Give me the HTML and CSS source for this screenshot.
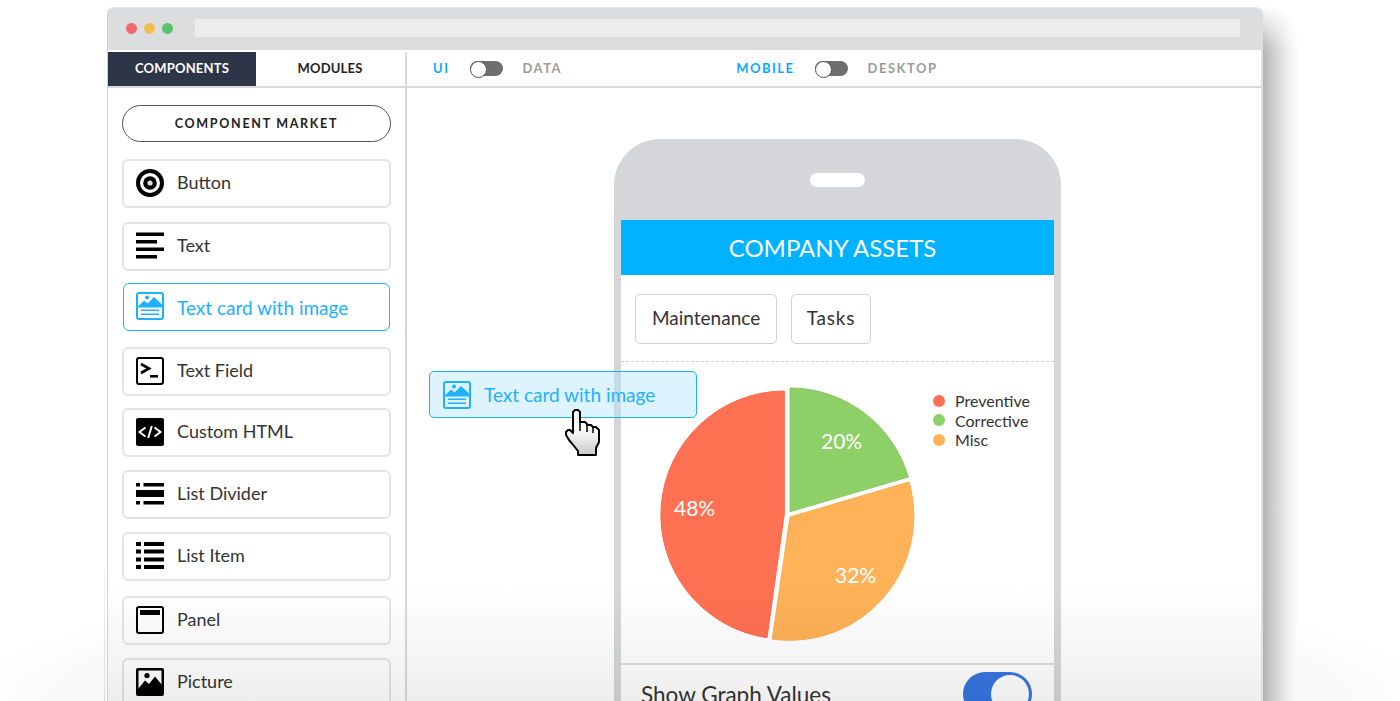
FILE: index.html
```html
<!DOCTYPE html>
<html>
<head>
    <meta charset="utf-8">
    <link rel="stylesheet" href="styles.css">
</head>
<body>
    <div class="window-shadow"></div>
    <div class="window-edge"></div>

    <div class="window">
        <div class="titlebar">
            <div class="dots">
                <span class="dot dot-red"></span>
                <span class="dot dot-yellow"></span>
                <span class="dot dot-green"></span>
            </div>
            <div class="urlbar"></div>
        </div>

        <div class="main">
            <div class="sidebar">
                <div class="tabs">
                    <div class="tab tab-active">COMPONENTS</div>
                    <div class="tab">MODULES</div>
                </div>
                <div class="palette">
                    <div class="market">COMPONENT MARKET</div>
                    <div class="items">
                        <div class="item">
                            <svg class="icon" viewBox="0 0 28 28"><circle cx="14" cy="14" r="12" fill="none" stroke="#000" stroke-width="4"/><circle cx="14" cy="14" r="6.800"/><circle cx="14" cy="14" r="2.600" fill="#ddd"/></svg>
                            <span>Button</span>
                        </div>
                        <div class="item">
                            <svg class="icon" viewBox="0 0 28 28"><path d="M0 0.500h28v3.500H0zM0 8h21v3.500H0zM0 15.500h28v3.500H0zM0 23h21v3.500H0z"/></svg>
                            <span>Text</span>
                        </div>
                        <div class="item item-selected">
                            <svg class="icon" viewBox="0 0 28 28" fill="#1fb0ff"><rect x="1" y="1" width="26" height="26" rx="2" fill="none" stroke="#1fb0ff" stroke-width="2"/><circle cx="11" cy="5.500" r="2"/><path d="M2 14.500L8 8.500l3.500 3L18 5l8 7.500v3H2z"/><path d="M5 17.500h18v1.400H5zM5 21.500h18v1.400H5z"/></svg>
                            <span>Text card with image</span>
                        </div>
                        <div class="item">
                            <svg class="icon" viewBox="0 0 28 28"><rect x="1" y="1" width="26" height="26" rx="2" fill="none" stroke="#000" stroke-width="2"/><path d="M5 7l8 4.500L5 16" fill="none" stroke="#000" stroke-width="2.600"/><path d="M14 18h8v2.600h-8z"/></svg>
                            <span>Text Field</span>
                        </div>
                        <div class="item">
                            <svg class="icon" viewBox="0 0 28 28"><rect width="28" height="28" rx="2"/><path d="M9.500 9.500L3.500 14l6 4.500M18.500 9.500l6 4.500-6 4.500M15.800 8l-3.600 12" fill="none" stroke="#fff" stroke-width="2"/></svg>
                            <span>Custom HTML</span>
                        </div>
                        <div class="item">
                            <svg class="icon" viewBox="0 0 28 28"><path d="M0 3h4v3.500H0zM7.500 3H28v3.500H7.500zM0 10h28v7H0zM0 21h4v3.500H0zM7.500 21H28v3.500H7.500z"/></svg>
                            <span>List Divider</span>
                        </div>
                        <div class="item">
                            <svg class="icon" viewBox="0 0 28 28"><path d="M0 0h5v4H0zM8 0h20v4H8zM0 7.500h5v4H0zM8 7.500h20v4H8zM0 15.500h5v4H0zM8 15.500h20v4H8zM0 23h5v4H0zM8 23h20v4H8z"/></svg>
                            <span>List Item</span>
                        </div>
                        <div class="item">
                            <svg class="icon" viewBox="0 0 28 28"><rect x="1" y="1" width="26" height="26" rx="2" fill="none" stroke="#000" stroke-width="2"/><path d="M4 4h20v5H4z"/></svg>
                            <span>Panel</span>
                        </div>
                        <div class="item">
                            <svg class="icon" viewBox="0 0 28 28"><rect width="28" height="28" rx="2"/><path d="M2.500 2.500h23v23h-23z" fill="#fff"/><circle cx="11" cy="7.500" r="2.600"/><path d="M2 21l7-8.500 4 3.500 6-7.500 7 8.500v11H2z"/></svg>
                            <span>Picture</span>
                        </div>
                    </div>
                </div>
            </div>

            <div class="stage">
                <div class="toolbar">
                    <div class="switch-group">
                        <span class="mode mode-on">UI</span>
                        <span class="toggle"></span>
                        <span class="mode">DATA</span>
                    </div>
                    <div class="switch-group switch-group-device">
                        <span class="mode mode-on">MOBILE</span>
                        <span class="toggle"></span>
                        <span class="mode">DESKTOP</span>
                    </div>
                </div>

                <div class="phone">
                    <div class="phone-top"><span class="speaker"></span></div>
                    <div class="screen">
                        <div class="screen-title">COMPANY ASSETS</div>
                        <div class="chips">
                            <div class="chip">Maintenance</div>
                            <div class="chip">Tasks</div>
                        </div>
                        <div class="chart">
                            <svg class="pie" viewBox="0 0 260 260">
                                <path fill="#ff7152" stroke="#f9694a" d="M127.300 6V129L110 252.700A124 124 0 0 1 127.300 6z"/>
                                <path fill="#8dd068" stroke="#86c961" d="M133 3V126.700L251.300 92A123.500 123.500 0 0 0 133 3z"/>
                                <path fill="#ffb257" stroke="#fbac50" d="M133 132L252 97A124 124 0 0 1 115.300 254z"/>
                                <text class="pie-label" x="17" y="131">48%</text>
                                <text class="pie-label" x="164" y="64">20%</text>
                                <text class="pie-label" x="178" y="198">32%</text>
                            </svg>
                            <div class="legend">
                                <div class="legend-row"><span class="swatch swatch-red"></span>Preventive</div>
                                <div class="legend-row"><span class="swatch swatch-green"></span>Corrective</div>
                                <div class="legend-row"><span class="swatch swatch-orange"></span>Misc</div>
                            </div>
                        </div>
                        <div class="setting">
                            <span>Show Graph Values</span>
                            <span class="blue-switch"></span>
                        </div>
                    </div>
                </div>
            </div>
        </div>

        <!-- card being dragged -->
        <div class="drag-card">
            <svg class="icon" viewBox="0 0 28 28" fill="#1fb0ff"><rect x="1" y="1" width="26" height="26" rx="2" fill="none" stroke="#1fb0ff" stroke-width="2"/><circle cx="11" cy="5.500" r="2"/><path d="M2 14.500L8 8.500l3.500 3L18 5l8 7.500v3H2z"/><path d="M5 17.500h18v1.400H5zM5 21.500h18v1.400H5z"/></svg>
            <span>Text card with image</span>
        </div>
        <svg class="hand" viewBox="0 0 36 48">
            <defs>
                <linearGradient id="handFill" x1="0" y1="0" x2="0" y2="1">
                    <stop offset="0.4" stop-color="#fff"/>
                    <stop offset="1" stop-color="#c9c9c9"/>
                </linearGradient>
            </defs>
            <path fill="url(#handFill)" stroke="#000" stroke-width="2" stroke-linejoin="round" d="M8 3L10 1h3l2 2v10h5l2 2v1h4l2 2h3l3 3v12l-3 6v7H13v-4L9 37 4 31 1 26v-3l2-2h2l3 3z"/>
            <path fill="none" stroke="#000" stroke-width="1.500" d="M15 13v9M22 15v8M28 18v6"/>
        </svg>

        <div class="fade"></div>
    </div>
</body>
</html>
```

FILE: styles.css
```css
* {
    margin: 0;
    padding: 0;
    box-sizing: border-box;
}

html, body {
    height: 701px;
    overflow: hidden;
}

body {
    position: relative;
    font-family: Lato, "Open Sans", sans-serif;
    color: #333;
    background: radial-gradient(ellipse 760px 130px at 50% 100%, #f2f2f2 0%, #f8f8f8 78%, #fff 100%) no-repeat;
}

.window-shadow {
    position: absolute;
    left: 1263px;
    top: 6px;
    width: 34px;
    height: 695px;
    border-top-right-radius: 30px;
    background: linear-gradient(to right, #b4b4b4 0%, #d2d2d2 35%, #f0f0f0 75%, #fbfbfb 100%);
    -webkit-mask-image: linear-gradient(to bottom, transparent 0, #000 45px);
    mask-image: linear-gradient(to bottom, transparent 0, #000 45px);
}

.window-edge {
    position: absolute;
    left: 104px;
    top: 570px;
    width: 1px;
    height: 131px;
    background: linear-gradient(to bottom, #f2f2f2, #dcdcdc);
}

.window {
    position: relative;
    width: 1156px;
    height: 694px;
    margin: 7px 0 0 107px;
    border: 1px solid #e9e9e9;
    border-left: 1px solid #cfcfcf;
    border-right: 2px solid #dedede;
    border-bottom: none;
    border-radius: 7px 7px 0 0;
    background: #fff;
    overflow: hidden;
}

.titlebar {
    display: flex;
    align-items: center;
    height: 42px;
    padding: 0 0 2px 17px;
    background: #dcddde;
}

.dots {
    display: flex;
    gap: 5px;
}

.dot {
    width: 13px;
    height: 13px;
    border-radius: 50%;
    border: 1px solid #e2e2e2;
}

.dot-red { background: #f0686c; }
.dot-yellow { background: #f4bd4f; }
.dot-green { background: #58c36a; }

.urlbar {
    width: 1045px;
    height: 18px;
    margin-left: 21px;
    background: #ecedee;
}

.main {
    display: flex;
    height: 651px;
    padding-top: 2px;
}

.sidebar {
    width: 299px;
    border-right: 2px solid #d9d9d9;
    flex: none;
}

.tabs {
    display: flex;
    height: 36px;
    border-bottom: 2px solid #d9d9d9;
}

.tab {
    width: 148px;
    display: flex;
    align-items: center;
    justify-content: center;
    padding-bottom: 2px;
    font-size: 13px;
    font-weight: 700;
    letter-spacing: 0.2px;
    color: #222;
}

.tab-active {
    background: #2d3549;
    color: #fff;
}

.palette {
    padding: 17px 14px 0;
}

.market {
    display: flex;
    align-items: center;
    justify-content: center;
    height: 37px;
    border: 1.500px solid #555;
    border-radius: 19px;
    font-size: 12.500px;
    font-weight: 700;
    letter-spacing: 1.700px;
    color: #222;
}

.items {
    display: flex;
    flex-direction: column;
    gap: 13px;
    margin-top: 17px;
}

.item {
    display: flex;
    align-items: center;
    flex: none;
    height: 49px;
    padding: 0 0 2px 12px;
    border: 2px solid #e4e4e4;
    border-radius: 6px;
    font-size: 18px;
    color: #333;
}

.item span {
    padding-bottom: 2px;
}

.item:nth-child(2) { margin-top: 1px; }
.item:nth-child(3) { margin-top: -1px; }
.item:nth-child(4) { margin-top: 3px; }
.item:nth-child(5) { margin-top: -1px; }
.item:nth-child(8) { margin-top: 2px; }

.item-selected {
    border: 1.500px solid #1fb0ff;
    color: #1fb0ff;
    margin-left: 1px;
    margin-right: 1px;
    height: 48px;
    padding-bottom: 0;
    font-size: 19px;
}

.item-selected span {
    padding-bottom: 0;
}

.item-selected .icon {
    margin-bottom: 2px;
}

.icon {
    width: 28px;
    height: 28px;
    flex: none;
    margin-right: 13px;
}

.stage {
    flex: 1;
}

.toolbar {
    display: flex;
    align-items: center;
    height: 36px;
    padding: 0 0 2px 26px;
    border-bottom: 2px solid #d9d9d9;
}

.switch-group {
    display: flex;
    align-items: center;
}

.switch-group-device {
    margin-left: 174px;
}

.mode {
    font-size: 13px;
    font-weight: 700;
    letter-spacing: 1.500px;
    color: #9b9b9b;
}

.mode-on {
    color: #0fa8ff;
}

.toggle {
    position: relative;
    width: 33px;
    height: 15px;
    margin: 0 20px;
    border-radius: 8px;
    background: #6e6e6e;
}

.toggle::before {
    content: "";
    position: absolute;
    left: 0;
    top: 0;
    width: 15px;
    height: 15px;
    border: 1.500px solid #555;
    border-radius: 50%;
    background: #fff;
}

.phone {
    width: 447px;
    height: 620px;
    margin: 51px 0 0 207px;
    padding: 0 7px;
    border-radius: 46px 46px 0 0;
    background: #d5d6d9;
}

.phone-top {
    display: flex;
    justify-content: center;
    height: 81px;
    padding-top: 34px;
}

.speaker {
    width: 55px;
    height: 14px;
    border-radius: 7px;
    background: #fff;
}

.screen {
    height: 539px;
    background: #fff;
}

.screen-title {
    display: flex;
    align-items: center;
    justify-content: center;
    height: 55px;
    padding-right: 10px;
    font-size: 24px;
    color: #fff;
    background: #00b2ff;
}

.chips {
    display: flex;
    gap: 14px;
    height: 87px;
    padding: 19px 14px 0;
    border-bottom: 1.500px dashed #cfcfcf;
}

.chip {
    display: flex;
    align-items: center;
    justify-content: center;
    height: 50px;
    padding: 0 16px 3px;
    border: 1.500px solid #d0d0d0;
    border-radius: 5px;
    font-size: 19px;
    color: #333;
}

.chip + .chip {
    padding: 0 14.500px 3px;
    letter-spacing: 0.8px;
}

.chart {
    display: flex;
    align-items: flex-start;
    height: 303px;
    padding: 23px 0 0 36px;
    border-bottom: 2px solid #dedede;
}

.pie {
    width: 260px;
    height: 260px;
    flex: none;
}

.pie-label {
    font-family: Lato, sans-serif;
    font-size: 21px;
    fill: #fff;
}

.legend {
    margin: 6px 0 0 16px;
}

.legend-row {
    display: flex;
    align-items: center;
    height: 19.500px;
    font-size: 16px;
    color: #333;
}

.swatch {
    width: 12px;
    height: 12px;
    margin-right: 10px;
    border-radius: 50%;
}

.swatch-red { background: #ff7152; }
.swatch-green { background: #8dd068; }
.swatch-orange { background: #ffb257; }

.setting {
    display: flex;
    align-items: center;
    justify-content: space-between;
    padding: 7px 22px 0 20px;
    font-size: 22.500px;
    color: #333;
}

.blue-switch {
    position: relative;
    width: 69px;
    height: 44px;
    border-radius: 22px;
    background: #3875e0;
}

.blue-switch::after {
    content: "";
    position: absolute;
    right: 3px;
    top: 3px;
    width: 38px;
    height: 38px;
    border-radius: 50%;
    background: #fff;
}

.drag-card {
    position: absolute;
    left: 321px;
    top: 363px;
    display: flex;
    align-items: center;
    width: 268px;
    height: 47px;
    padding-left: 13px;
    border: 1.500px solid #1fb0ff;
    border-radius: 5px;
    font-size: 19px;
    color: #1fb0ff;
    background: rgba(170, 228, 255, 0.4);
}

.drag-card .icon {
    margin-right: 13px;
}

.hand {
    position: absolute;
    left: 457px;
    top: 401px;
    width: 36px;
    height: 48px;
}

.fade {
    position: absolute;
    left: 0;
    right: 0;
    bottom: 0;
    height: 115px;
    background: linear-gradient(to bottom, transparent, rgba(0, 0, 0, 0.065));
    pointer-events: none;
}
```
